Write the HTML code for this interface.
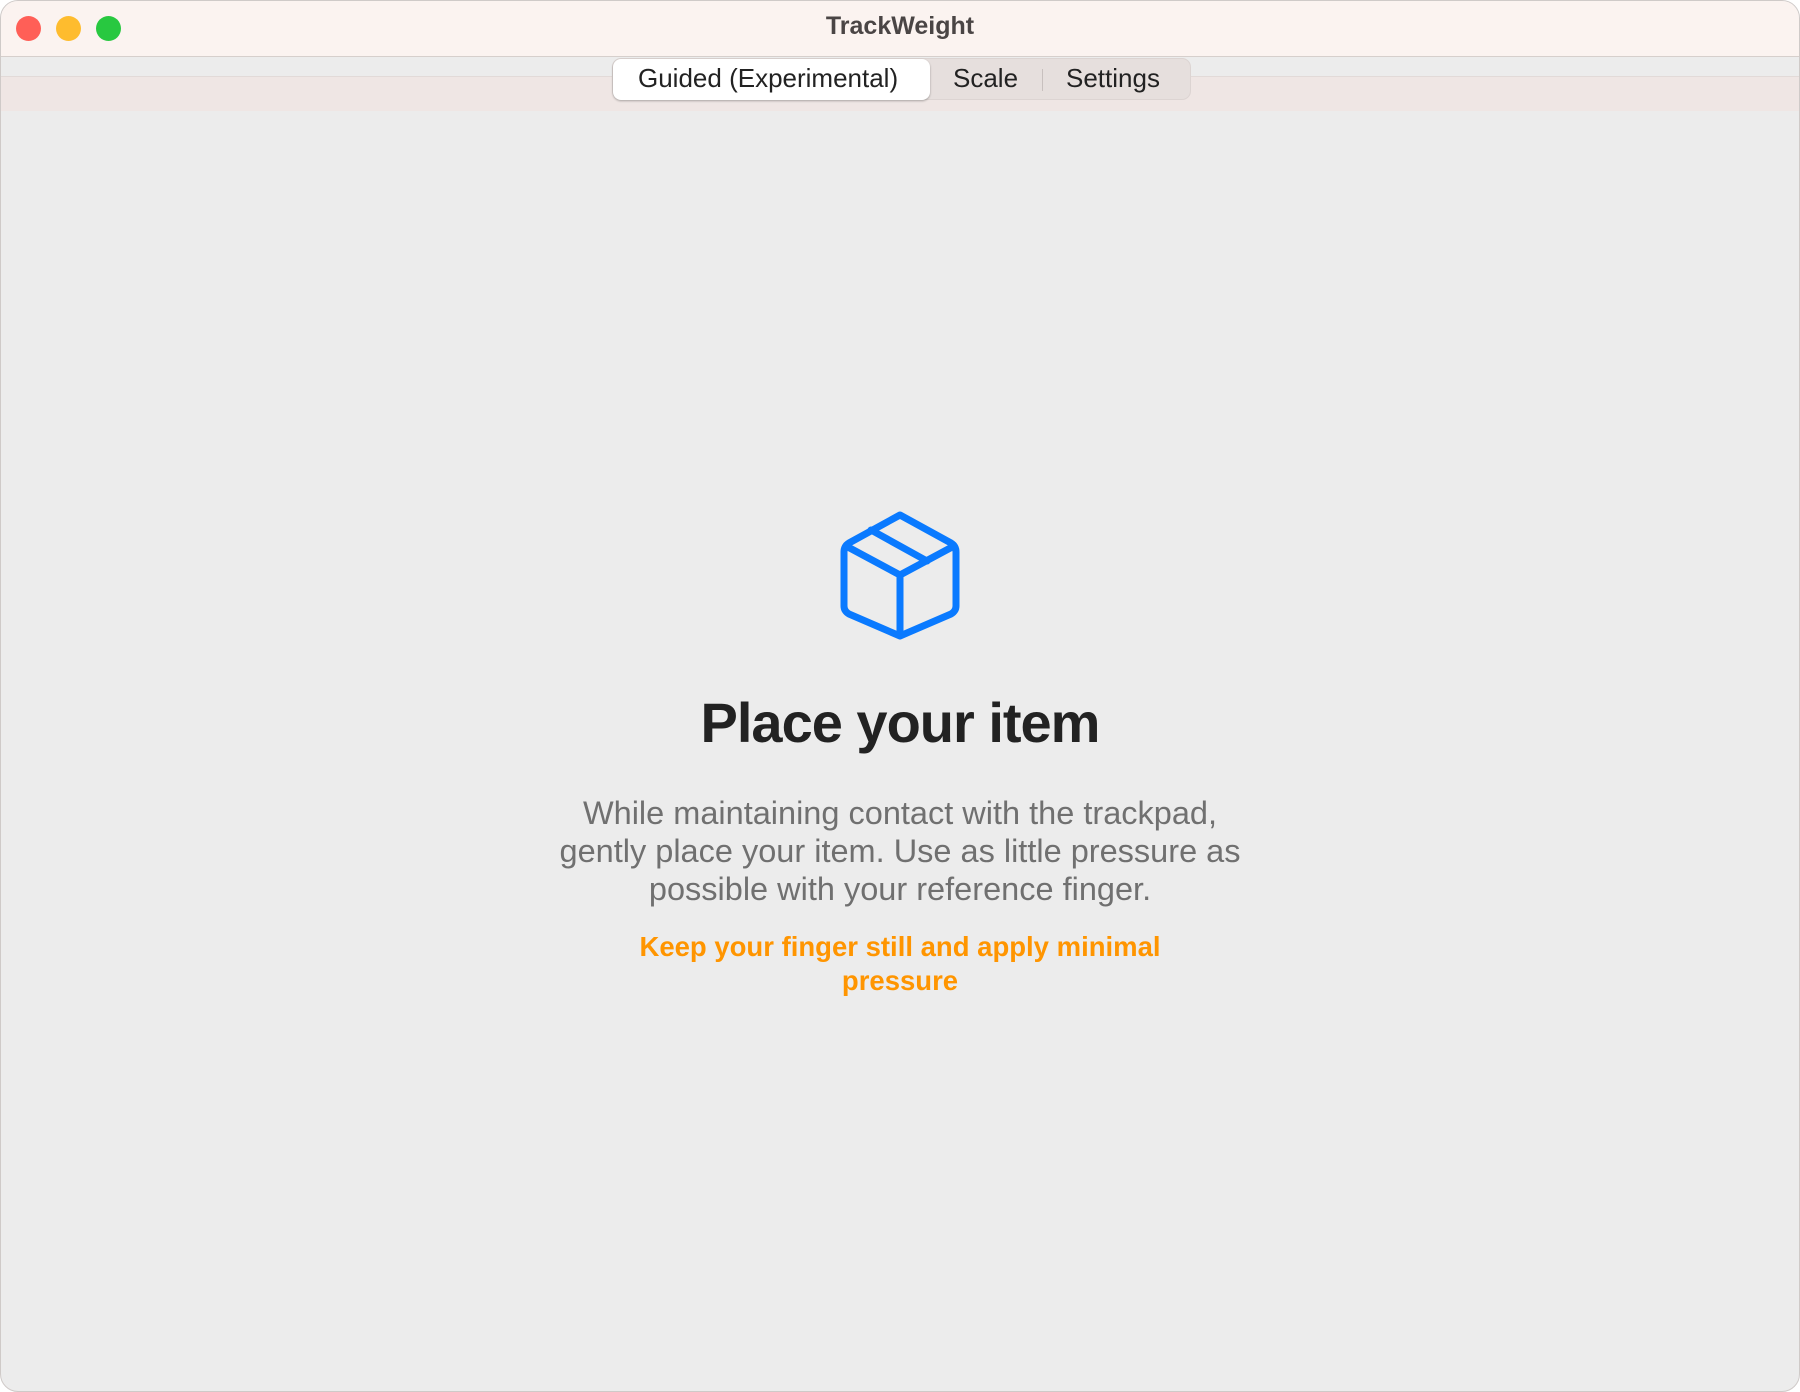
<!DOCTYPE html>
<html><head><meta charset="utf-8"><style>
html,body{margin:0;padding:0;width:1800px;height:1392px;background:#fff;overflow:hidden;font-family:"Liberation Sans",sans-serif}
.win{position:absolute;left:0;top:0;width:1798px;height:1390px;border:1px solid #cfcac8;border-radius:18px;overflow:hidden;background:#ececec}
.tb{position:absolute;left:0;top:0;right:0;height:55px;background:#fbf3f0;border-bottom:1px solid #d6cfcc}
.band{position:absolute;left:0;right:0;top:75px;height:34px;background:#efe6e4;border-top:1px solid #e2dad8}
.dot{position:absolute;top:15px;width:25px;height:25px;border-radius:50%}
.title{position:absolute;top:11px;left:0;right:0;text-align:center;font-weight:bold;font-size:25px;color:#4a4545}
.seg{position:absolute;left:611px;top:57px;width:579px;height:42px;background:#e6dfdd;border-radius:9px;border:1px solid #dcd4d2;box-sizing:border-box}
.sel{position:absolute;left:0;top:0;width:317px;height:41px;background:#fff;border-radius:8px;box-shadow:0 1px 2px rgba(0,0,0,.3)}
.st{position:absolute;top:4px;font-size:26px;color:#222}
.div{position:absolute;left:429px;top:10px;width:1px;height:22px;background:#c8c0be}
.c{position:absolute;left:0;right:0;text-align:center}
</style></head><body>
<div class="win">
<div class="tb">
<div class="dot" style="left:15px;background:#ff5f57"></div>
<div class="dot" style="left:55px;background:#febc2e"></div>
<div class="dot" style="left:95px;background:#28c840"></div>
<div class="title">TrackWeight</div>
</div>
<div class="band"></div>
<div class="seg"><div class="sel"></div>
<div class="st" style="left:25px">Guided (Experimental)</div>
<div class="st" style="left:340px">Scale</div>
<div class="div"></div>
<div class="st" style="left:453px">Settings</div>
</div>
<svg style="position:absolute;left:838px;top:508px" width="122" height="132" viewBox="0 0 122 132">
<g fill="none" stroke="#0a7aff" stroke-width="7" stroke-linejoin="round" stroke-linecap="round">
<path d="M61 6 L112 34 Q117 37 117 43 L117 97 Q117 102 112 105 L61 127 L10 105 Q5 102 5 97 L5 43 Q5 37 10 34 Z"/>
<path d="M7 37 L61 66 L115 37"/>
<path d="M61 66 L61 126"/>
<path d="M32 21 L88 52"/>
</g></svg>
<div class="c" style="top:689px;font-size:56px;font-weight:bold;color:#222;letter-spacing:-1px">Place your item</div>
<div class="c" style="top:793px;font-size:32.5px;line-height:38px;color:#707070">While maintaining contact with the trackpad,<br>gently place your item. Use as little pressure as<br>possible with your reference finger.</div>
<div class="c" style="top:929px;font-size:27.5px;line-height:34px;color:#ff9500;font-weight:bold">Keep your finger still and apply minimal<br>pressure</div>
</div>
</body></html>
